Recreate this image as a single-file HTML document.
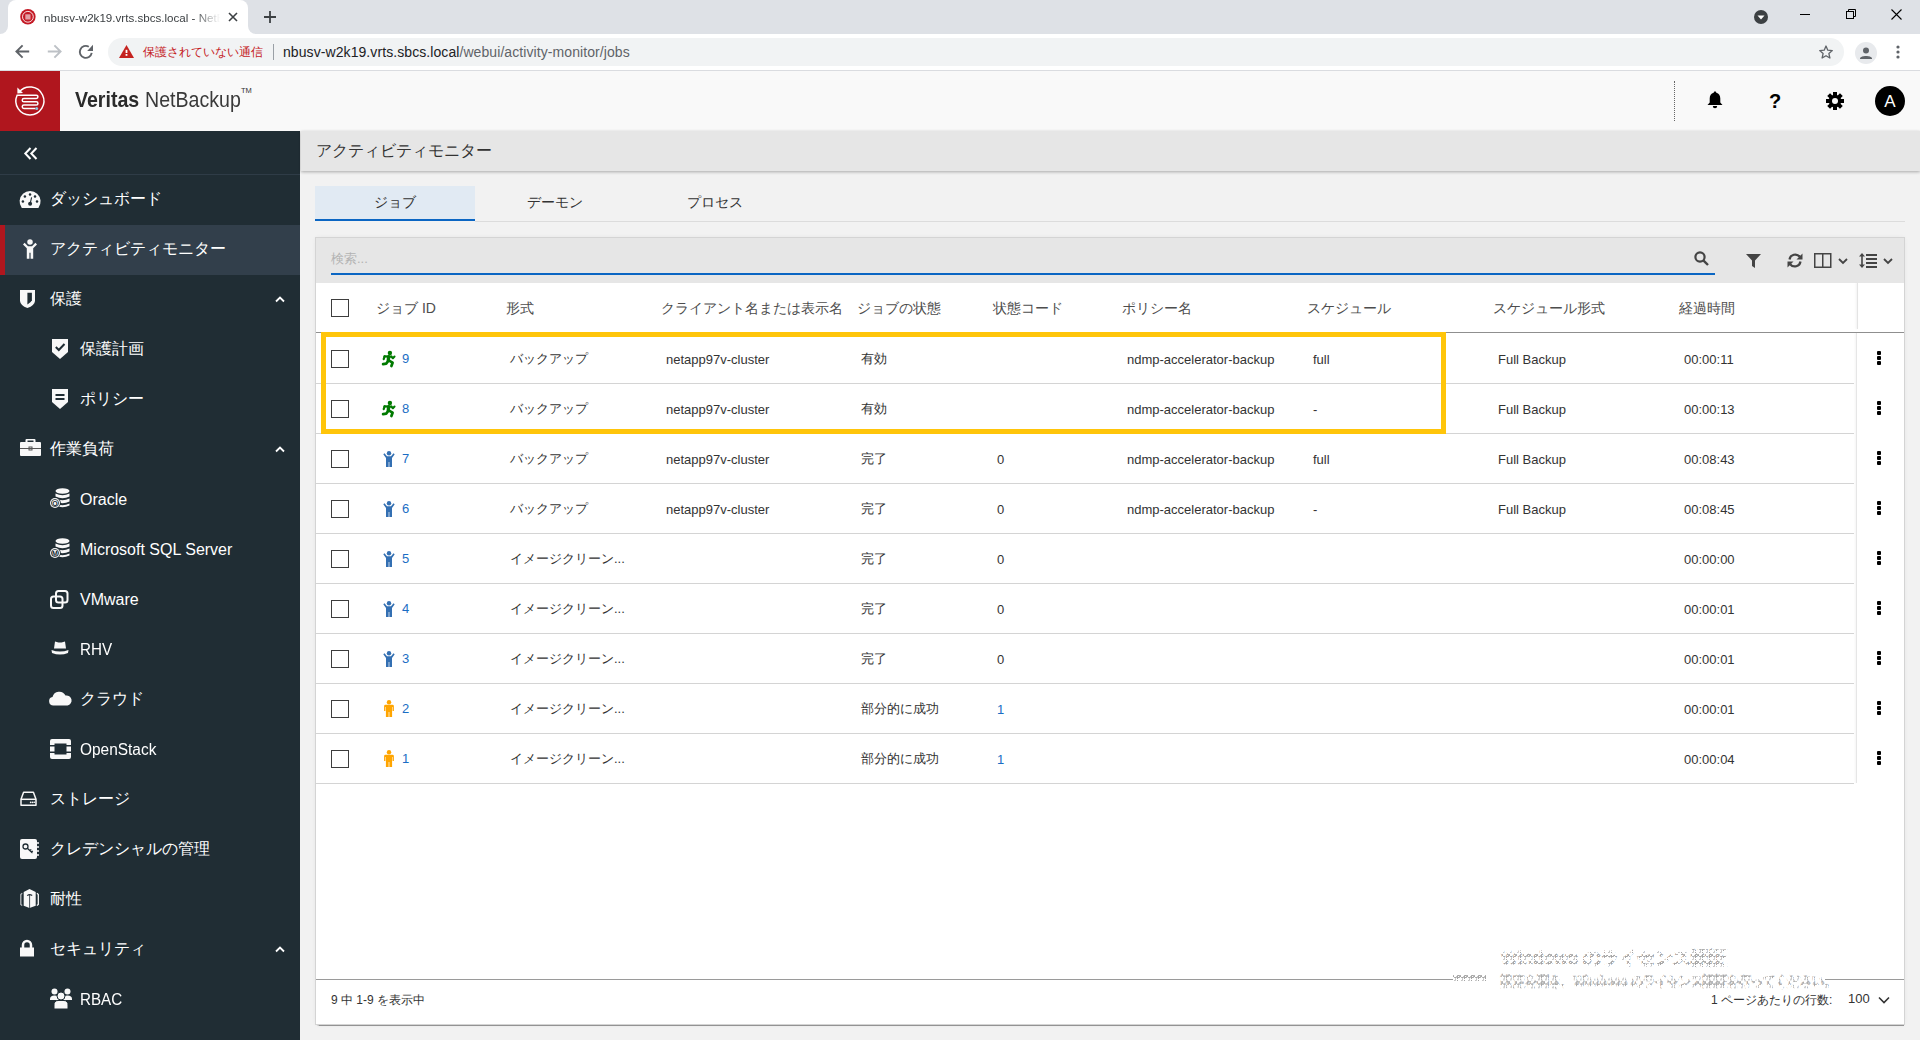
<!DOCTYPE html>
<html><head><meta charset="utf-8"><style>
*{box-sizing:border-box;margin:0;padding:0}
html,body{width:1920px;height:1040px;overflow:hidden;font-family:"Liberation Sans",sans-serif;background:#f2f2f2;color:#333}
.a{position:absolute}
svg{display:block;overflow:visible}
.nw{white-space:nowrap}
.si{position:absolute;left:0;width:300px;height:50px;color:#fff;font-size:16px}
.si .t{position:absolute;left:50px;top:15px;white-space:nowrap;line-height:18px}
.si.sub .t{left:80px}
.hd{position:absolute;top:299px;font-size:14px;color:#4d4d4d;line-height:18px;white-space:nowrap}
.c{position:absolute;font-size:13px;color:#333;line-height:16px;white-space:nowrap}
.cb{position:absolute;left:331px;width:18px;height:18px;border:1.4px solid #3d3d3d;background:#fff}
.sep{position:absolute;left:316px;width:1538px;height:1px;background:#d4d4d4}
.num{position:absolute;left:402px;font-size:13px;color:#1a6dc4;line-height:16px}
.kb{position:absolute;left:1877px;width:4px}
.kb i{display:block;width:4px;height:4px;background:#000;border-radius:1px;margin-bottom:1px}
</style></head><body>
<div class="a" style="left:0;top:0;width:1920px;height:34px;background:#dee1e6"></div>
<div class="a" style="left:8px;top:0;width:240px;height:34px;background:#fff;border-radius:8px 8px 0 0"></div>
<div class="a" style="left:0;top:26px;width:8px;height:8px;background:#fff"></div><div class="a" style="left:0;top:26px;width:8px;height:8px;background:#dee1e6;border-radius:0 0 8px 0"></div>
<div class="a" style="left:248px;top:26px;width:8px;height:8px;background:#fff"></div><div class="a" style="left:248px;top:26px;width:8px;height:8px;background:#dee1e6;border-radius:0 0 0 8px"></div>
<svg class="a" style="left:20px;top:9px" width="16" height="16" viewBox="0 0 16 16"><circle cx="7.9" cy="7.8" r="7.7" fill="#c41a26"/><circle cx="7.9" cy="7.8" r="5.4" fill="none" stroke="#fff" stroke-width="1" opacity=".85"/><rect x="5.3" y="5.3" width="5.2" height="5.2" fill="#e3a0a6"/></svg>

<div class="a nw" style="left:44px;top:11px;font-size:11.6px;line-height:14px;color:#3c4043;width:176px;overflow:hidden;-webkit-mask-image:linear-gradient(90deg,#000 150px,transparent 176px)">nbusv-w2k19.vrts.sbcs.local - NetBackup</div>
<svg class="a" style="left:228px;top:12px" width="10" height="10" viewBox="0 0 10 10"><path d="M1 1L9 9M9 1L1 9" stroke="#3c4043" stroke-width="1.6"/></svg>

<svg class="a" style="left:263px;top:10px" width="14" height="14" viewBox="0 0 14 14"><path d="M7 1V13M1 7H13" stroke="#3c4043" stroke-width="1.8"/></svg>

<svg class="a" style="left:1754px;top:10px" width="14" height="14" viewBox="0 0 14 14"><circle cx="7" cy="7" r="7" fill="#3c4043"/><path d="M3.5 5.5H10.5L7 9.5Z" fill="#fff"/></svg>

<svg class="a" style="left:1800px;top:14px" width="10" height="1" viewBox="0 0 10 1"><rect width="10" height="1" fill="#000"/></svg>

<svg class="a" style="left:1846px;top:9px" width="10" height="10" viewBox="0 0 10 10"><rect x="0.5" y="2.5" width="7" height="7" fill="none" stroke="#000"/><path d="M2.5 2.5V0.5H9.5V7.5H7.5" fill="none" stroke="#000"/></svg>

<svg class="a" style="left:1891px;top:9px" width="11" height="11" viewBox="0 0 11 11"><path d="M0.5 0.5L10.5 10.5M10.5 0.5L0.5 10.5" stroke="#000" stroke-width="1.1"/></svg>

<div class="a" style="left:0;top:34px;width:1920px;height:37px;background:#fff;border-bottom:1px solid #dadce0"></div>
<svg class="a" style="left:15px;top:44px" width="15" height="16" viewBox="0 0 15 16"><path d="M7.6 1.3L1.4 7.5L7.6 13.7M1.4 7.5H14.2" fill="none" stroke="#5f6368" stroke-width="1.9"/></svg>

<svg class="a" style="left:47px;top:44px" width="15" height="16" viewBox="0 0 15 16"><path d="M7.4 1.3L13.6 7.5L7.4 13.7M13.6 7.5H0.8" fill="none" stroke="#bdc1c6" stroke-width="1.9"/></svg>

<svg class="a" style="left:78px;top:44px" width="16" height="16" viewBox="0 0 16 16"><path d="M13.71 8.94A6 6 0 1 1 10.8 2.7" fill="none" stroke="#5f6368" stroke-width="1.9"/><path d="M15 0.8V6.9H9.2Z" fill="#5f6368"/></svg>

<div class="a" style="left:108px;top:38px;width:1736px;height:28px;background:#f1f3f4;border-radius:14px"></div>
<svg class="a" style="left:119px;top:45px" width="15" height="13" viewBox="0 0 15 13"><path d="M7.5 0L15 13H0Z" fill="#c5221f"/><rect x="6.6" y="4.8" width="1.8" height="3.2" fill="#fff"/><rect x="6.6" y="9" width="1.8" height="1.8" fill="#fff"/></svg>

<div class="a nw" style="left:143px;top:44px;font-size:12.4px;line-height:16px;color:#c5221f">保護されていない通信</div>
<div class="a" style="left:273px;top:44px;width:1px;height:16px;background:#9aa0a6"></div>
<div class="a nw" style="left:283px;top:44px;font-size:14px;line-height:16px;color:#202124;letter-spacing:0.08px">nbusv-w2k19.vrts.sbcs.local<span style="color:#5f6368">/webui/activity-monitor/jobs</span></div>
<svg class="a" style="left:1819px;top:45px" width="14" height="14" viewBox="0 0 14 14"><path d="M7 1L8.8 5.2L13.3 5.6L9.9 8.6L10.9 13L7 10.7L3.1 13L4.1 8.6L0.7 5.6L5.2 5.2Z" fill="none" stroke="#5f6368" stroke-width="1.3" stroke-linejoin="round"/></svg>

<svg class="a" style="left:1855px;top:42px" width="22" height="22" viewBox="0 0 22 22"><circle cx="11" cy="11" r="11" fill="#e8eaed"/><circle cx="11" cy="8.5" r="3" fill="#5f6368"/><path d="M5 16.5C5 13 17 13 17 16.5V17H5Z" fill="#5f6368"/></svg>

<svg class="a" style="left:1896px;top:45px" width="4" height="14" viewBox="0 0 4 14"><circle cx="2" cy="2" r="1.6" fill="#5f6368"/><circle cx="2" cy="7" r="1.6" fill="#5f6368"/><circle cx="2" cy="12" r="1.6" fill="#5f6368"/></svg>

<div class="a" style="left:0;top:71px;width:1920px;height:60px;background:#f9f9f9"></div>
<div class="a" style="left:0;top:71px;width:60px;height:60px;background:#b0161e"></div>
<svg class="a" style="left:10px;top:82px" width="40" height="38" viewBox="0 0 40 38"><path d="M9.18 9.9A14 14 0 1 1 7.11 13.2L26.3 13.2A1.65 1.65 0 0 1 26.3 16.5L13.9 16.5A1.65 1.65 0 0 0 13.9 19.8L26.3 19.8A1.65 1.65 0 0 1 26.3 23.1L13.9 23.1A1.65 1.65 0 0 0 13.9 26.4L25.4 26.4" fill="none" stroke="#fff" stroke-width="1.5"/><path d="M7.4 5.6L7.4 11.4L13 10.9Z" fill="#fff"/><circle cx="26.7" cy="26.4" r="1.5" fill="#8ec3dd"/></svg>

<div class="a nw" style="left:75px;top:87px;font-size:22px;line-height:26px;color:#2b2b2b;font-weight:bold;transform:scaleX(0.89);transform-origin:0 0">Veritas</div>
<div class="a nw" style="left:145px;top:87px;font-size:22px;line-height:26px;color:#3a3a3a;transform:scaleX(0.89);transform-origin:0 0">NetBackup</div>
<div class="a nw" style="left:241px;top:86px;font-size:7.5px;line-height:9px;color:#333">TM</div>
<div class="a" style="left:1674px;top:81px;width:1px;height:40px;border-left:1px dotted #666"></div>
<svg class="a" style="left:1707px;top:91px" width="16" height="18" viewBox="0 0 16 18"><path d="M8 0.5C8.8 0.5 9.3 1 9.3 1.8C12 2.5 13.3 4.8 13.3 7.5V11.5L15.5 14H0.5L2.7 11.5V7.5C2.7 4.8 4 2.5 6.7 1.8C6.7 1 7.2 0.5 8 0.5Z" fill="#000"/><path d="M5.8 15H10.2A2.2 2.2 0 0 1 5.8 15Z" fill="#000"/></svg>

<div class="a nw" style="left:1769px;top:90px;font-size:20px;line-height:22px;font-weight:bold;color:#000">?</div>
<svg class="a" style="left:1826px;top:92px" width="18" height="18" viewBox="0 0 18 18"><g transform="translate(9 9)"><g fill="#000"><rect x="-2" y="-9" width="4" height="5" transform="rotate(0)"/><rect x="-2" y="-9" width="4" height="5" transform="rotate(45)"/><rect x="-2" y="-9" width="4" height="5" transform="rotate(90)"/><rect x="-2" y="-9" width="4" height="5" transform="rotate(135)"/><rect x="-2" y="-9" width="4" height="5" transform="rotate(180)"/><rect x="-2" y="-9" width="4" height="5" transform="rotate(225)"/><rect x="-2" y="-9" width="4" height="5" transform="rotate(270)"/><rect x="-2" y="-9" width="4" height="5" transform="rotate(315)"/></g><circle r="6.3" fill="#000"/><circle r="3" fill="#f9f9f9"/></g></svg>

<div class="a" style="left:1875px;top:86px;width:30px;height:30px;border-radius:50%;background:#000"></div>
<div class="a nw" style="left:1875px;top:92px;width:30px;text-align:center;font-size:17px;line-height:20px;color:#fff">A</div>
<div class="a" style="left:0;top:131px;width:300px;height:909px;background:#202d34"></div>
<div class="a" style="left:300px;top:131px;width:1px;height:909px;background:#f2f2f2"></div>
<svg class="a" style="left:24px;top:147px" width="14" height="13" viewBox="0 0 14 13"><path d="M6.5 1L1.3 6.5L6.5 12M12.5 1L7.3 6.5L12.5 12" fill="none" stroke="#fff" stroke-width="2"/></svg>

<div class="a" style="left:0;top:174px;width:300px;height:1px;background:#2f3c47"></div>
<div class="si" style="top:175px;"><span class="t">ダッシュボード</span></div>
<div class="si" style="top:225px;background:#323f4b;"><span class="t">アクティビティモニター</span></div>
<div class="si" style="top:275px;"><span class="t">保護</span></div>
<svg class="a" style="left:275px;top:296px" width="10" height="6" viewBox="0 0 10 6"><path d="M1 5.5L5 1.5L9 5.5" fill="none" stroke="#fff" stroke-width="1.8"/></svg>

<div class="si sub" style="top:325px;"><span class="t">保護計画</span></div>
<div class="si sub" style="top:375px;"><span class="t">ポリシー</span></div>
<div class="si" style="top:425px;"><span class="t">作業負荷</span></div>
<svg class="a" style="left:275px;top:446px" width="10" height="6" viewBox="0 0 10 6"><path d="M1 5.5L5 1.5L9 5.5" fill="none" stroke="#fff" stroke-width="1.8"/></svg>

<div class="si sub" style="top:475px;"><span class="t" style="top:16px">Oracle</span></div>
<div class="si sub" style="top:525px;"><span class="t" style="top:16px">Microsoft SQL Server</span></div>
<div class="si sub" style="top:575px;"><span class="t" style="top:16px">VMware</span></div>
<div class="si sub" style="top:625px;"><span class="t" style="top:16px;transform:scaleX(0.95);transform-origin:0 0">RHV</span></div>
<div class="si sub" style="top:675px;"><span class="t">クラウド</span></div>
<div class="si sub" style="top:725px;"><span class="t" style="top:16px;transform:scaleX(0.965);transform-origin:0 0">OpenStack</span></div>
<div class="si" style="top:775px;"><span class="t">ストレージ</span></div>
<div class="si" style="top:825px;"><span class="t">クレデンシャルの管理</span></div>
<div class="si" style="top:875px;"><span class="t">耐性</span></div>
<div class="si" style="top:925px;"><span class="t">セキュリティ</span></div>
<svg class="a" style="left:275px;top:946px" width="10" height="6" viewBox="0 0 10 6"><path d="M1 5.5L5 1.5L9 5.5" fill="none" stroke="#fff" stroke-width="1.8"/></svg>

<div class="si sub" style="top:975px;"><span class="t" style="top:16px;transform:scaleX(0.95);transform-origin:0 0">RBAC</span></div>
<div class="a" style="left:0;top:225px;width:5px;height:50px;background:#b0161e"></div>
<svg class="a" style="left:14px;top:185px" width="32" height="28" viewBox="0 0 32 28"><path d="M7.8 22.9A10.5 10.5 0 1 1 24.4 22.9Z" fill="#f8f8f8"/><circle cx="16" cy="9.4" r="1.25" fill="#202d34"/><circle cx="10.9" cy="11.6" r="1.25" fill="#202d34"/><circle cx="21" cy="11.6" r="1.25" fill="#202d34"/><circle cx="8.9" cy="16.5" r="1.25" fill="#202d34"/><circle cx="23" cy="16.5" r="1.25" fill="#202d34"/><path d="M16.1 18.8L17.6 12.4" stroke="#202d34" stroke-width="1.1"/><circle cx="16.1" cy="18.8" r="2" fill="#202d34"/></svg>

<svg class="a" style="left:23px;top:239px" width="14" height="20" viewBox="0 0 14 20"><circle cx="7" cy="3" r="2.75" fill="#f8f8f8"/><path d="M0 5.4L1.6 3.8L5 7.2H9L12.4 3.8L14 5.4L10.2 9.2V19.8H7.6V13.8H6.4V19.8H3.8V9.2Z" fill="#f8f8f8"/></svg>

<svg class="a" style="left:20px;top:290px" width="15" height="18" viewBox="0 0 15 18"><path d="M0 0H15V10.9Q14.6 15.4 7.4 17.9Q0.4 15.4 0 10.9Z" fill="#f8f8f8"/><path d="M7.4 2.8H11.9V10.3Q11.2 12.6 7.4 14.4Z" fill="#202d34"/></svg>

<svg class="a" style="left:52px;top:339px" width="16" height="20" viewBox="0 0 16 20"><path d="M0 0H16V13L8 20L0 13Z" fill="#f8f8f8"/><path d="M3.8 8L6.8 11L12.5 5" fill="none" stroke="#202d34" stroke-width="2"/></svg>

<svg class="a" style="left:52px;top:389px" width="16" height="20" viewBox="0 0 16 20"><path d="M0 0H16V13L8 20L0 13Z" fill="#f8f8f8"/><rect x="3.5" y="5" width="9" height="2" fill="#202d34"/><rect x="3.5" y="9" width="9" height="2" fill="#202d34"/></svg>

<svg class="a" style="left:20px;top:439px" width="21" height="17" viewBox="0 0 21 17"><rect x="5.5" y="0" width="10" height="4" rx="1" fill="#f8f8f8"/><rect x="7.5" y="1.5" width="6" height="2" fill="#202d34"/><rect x="0" y="3" width="21" height="14" rx="1" fill="#f8f8f8"/><rect x="0" y="9" width="21" height="1" fill="#555"/><rect x="9" y="8" width="3" height="3" fill="none" stroke="#555" stroke-width="1"/></svg>

<svg class="a" style="left:49px;top:488px" width="21" height="20" viewBox="0 0 21 20"><ellipse cx="13.5" cy="3" rx="7" ry="2.8" fill="#f8f8f8"/><path d="M6.5 5.5Q13.5 9 20.5 5.5V8.5Q13.5 12 6.5 8.5Z" fill="#f8f8f8"/><path d="M6.5 10.5Q13.5 14 20.5 10.5V13.5Q13.5 17 6.5 13.5Z" fill="#f8f8f8"/><path d="M6.5 15.5Q13.5 19 20.5 15.5V17.5Q13.5 21 6.5 17.5Z" fill="#f8f8f8"/><circle cx="6" cy="15" r="5.8" fill="#202d34"/><circle cx="6" cy="15" r="5" fill="#f8f8f8"/><circle cx="6" cy="15" r="3.6" fill="none" stroke="#202d34" stroke-width="0.8"/><text x="6" y="17.5" font-size="7" text-anchor="middle" fill="#202d34" font-family="Liberation Sans" font-weight="bold">O</text></svg>

<svg class="a" style="left:49px;top:538px" width="21" height="20" viewBox="0 0 21 20"><ellipse cx="13.5" cy="3" rx="7" ry="2.8" fill="#f8f8f8"/><path d="M6.5 5.5Q13.5 9 20.5 5.5V8.5Q13.5 12 6.5 8.5Z" fill="#f8f8f8"/><path d="M6.5 10.5Q13.5 14 20.5 10.5V13.5Q13.5 17 6.5 13.5Z" fill="#f8f8f8"/><path d="M6.5 15.5Q13.5 19 20.5 15.5V17.5Q13.5 21 6.5 17.5Z" fill="#f8f8f8"/><circle cx="6" cy="15" r="5.8" fill="#202d34"/><circle cx="6" cy="15" r="5" fill="#f8f8f8"/><circle cx="6" cy="15" r="3.6" fill="none" stroke="#202d34" stroke-width="0.8"/><text x="6" y="17.5" font-size="7" text-anchor="middle" fill="#202d34" font-family="Liberation Sans" font-weight="bold">M</text></svg>

<svg class="a" style="left:50px;top:590px" width="19" height="19" viewBox="0 0 19 19"><rect x="6" y="1" width="11.5" height="11.5" rx="2.5" fill="none" stroke="#f8f8f8" stroke-width="2"/><rect x="1" y="6.5" width="11.5" height="11.5" rx="2.5" fill="none" stroke="#f8f8f8" stroke-width="2"/></svg>

<svg class="a" style="left:51px;top:641px" width="18" height="15" viewBox="0 0 18 15"><path d="M4 0.5L7.5 1.5L10.5 1.5L14 0.5L15 7.5H3Z" fill="#f8f8f8"/><path d="M0.5 9Q9 12 17.5 9L17 12Q9 15 1 12Z" fill="#f8f8f8"/></svg>

<svg class="a" style="left:49px;top:689px" width="23" height="17" viewBox="0 0 23 17"><path d="M4.5 16.5A4.3 4.3 0 0 1 3.5 8A7 7 0 0 1 16.5 6.5A5 5 0 0 1 18.5 16.5Z" fill="#f8f8f8"/></svg>

<svg class="a" style="left:50px;top:739px" width="21" height="20" viewBox="0 0 21 20"><path d="M0 2A2 2 0 0 1 2 0H19A2 2 0 0 1 21 2V6H16.5V4.5H4.5V6H0Z" fill="#f8f8f8"/><path d="M0 14H4.5V15.5H16.5V14H21V18A2 2 0 0 1 19 20H2A2 2 0 0 1 0 18Z" fill="#f8f8f8"/><rect x="0" y="7.5" width="4.5" height="5" fill="#f8f8f8"/><rect x="16.5" y="7.5" width="4.5" height="5" fill="#f8f8f8"/></svg>

<svg class="a" style="left:16px;top:786px" width="26" height="26" viewBox="0 0 26 26"><path d="M7.6 6.3H17.4L20 13.3V19.3H5V13.3Z" fill="none" stroke="#f8f8f8" stroke-width="1.5" stroke-linejoin="round"/><path d="M5 13.3H20" stroke="#f8f8f8" stroke-width="1.5"/><circle cx="14.7" cy="16.3" r="0.9" fill="#f8f8f8"/><circle cx="16.7" cy="16.3" r="0.9" fill="#f8f8f8"/><circle cx="18.4" cy="16.3" r="0.8" fill="#f8f8f8"/></svg>

<svg class="a" style="left:20px;top:839px" width="19" height="20" viewBox="0 0 19 20"><rect x="0" y="0" width="17" height="20" rx="2" fill="#f8f8f8"/><circle cx="18" cy="4" r="1" fill="#f8f8f8"/><circle cx="18" cy="8" r="1" fill="#f8f8f8"/><circle cx="18" cy="12" r="1" fill="#f8f8f8"/><circle cx="18" cy="16" r="1" fill="#f8f8f8"/><circle cx="5.5" cy="7.5" r="2.5" fill="none" stroke="#202d34" stroke-width="1.3"/><path d="M7.3 9.3L12.5 14M10 11.6L11.3 10.5M11.5 13L12.8 11.9" stroke="#202d34" stroke-width="1.3"/></svg>

<svg class="a" style="left:16px;top:885px" width="26" height="26" viewBox="0 0 26 26"><path d="M13.5 4L19.7 7V20.8L13.5 23L7.7 20.8V7Z" fill="#f8f8f8"/><path d="M6.2 8.3L4.8 9.5V19.5L6.2 20.6" fill="none" stroke="#b9bcbf" stroke-width="1.3"/><path d="M20.9 8.3L22.3 9.5V19.5L20.9 20.6" fill="none" stroke="#f8f8f8" stroke-width="1.3"/><path d="M13.6 9.5V23" stroke="#4a525a" stroke-width="1"/><path d="M11.2 10.6Q13.6 8.6 16.2 10.6" fill="none" stroke="#2a333b" stroke-width="1.2"/></svg>

<svg class="a" style="left:20px;top:940px" width="14" height="17" viewBox="0 0 14 17"><path d="M3 8V5A4 4 0 0 1 11 5V8" fill="none" stroke="#f8f8f8" stroke-width="2.5"/><rect x="0" y="7.5" width="14" height="9" fill="#f8f8f8"/></svg>

<svg class="a" style="left:50px;top:988px" width="22" height="21" viewBox="0 0 22 21"><circle cx="4.5" cy="3.5" r="3" fill="#f8f8f8"/><circle cx="17.5" cy="3.5" r="3" fill="#f8f8f8"/><path d="M0 11A4.5 3.5 0 0 1 9 11V12H0Z" fill="#f8f8f8"/><path d="M13 11A4.5 3.5 0 0 1 22 11V12H13Z" fill="#f8f8f8"/><circle cx="11" cy="8" r="4" stroke="#202d34" stroke-width="1" fill="#f8f8f8"/><path d="M4 21V17A4 4 0 0 1 8 12.5H14A4 4 0 0 1 18 17V21Z" stroke="#202d34" stroke-width="1" fill="#f8f8f8"/></svg>

<div class="a" style="left:301px;top:131px;width:1619px;height:40px;background:#e6e6e6;box-shadow:0 1px 3px rgba(0,0,0,.3)"></div>
<div class="a nw" style="left:316px;top:142px;font-size:16px;line-height:18px;color:#333">アクティビティモニター</div>
<div class="a" style="left:315px;top:186px;width:160px;height:35px;background:#e1eaf3;border-bottom:2px solid #0b66c3"></div>
<div class="a" style="left:475px;top:221px;width:1430px;height:1px;background:#dcdcdc"></div>
<div class="a nw" style="left:315px;top:195px;width:160px;text-align:center;font-size:13.5px;line-height:16px;color:#333">ジョブ</div>
<div class="a nw" style="left:475px;top:195px;width:160px;text-align:center;font-size:13.5px;line-height:16px;color:#333">デーモン</div>
<div class="a nw" style="left:635px;top:195px;width:160px;text-align:center;font-size:13.5px;line-height:16px;color:#333">プロセス</div>
<div class="a" style="left:316px;top:238px;width:1588px;height:786px;background:#fff;box-shadow:0 0 0 1px #d4d4d4,0 2px 1px -0.5px rgba(0,0,0,.38),0 0 5px rgba(0,0,0,.07)"></div>
<div class="a" style="left:316px;top:238px;width:1588px;height:45px;background:#e6e6e6"></div>
<div class="a nw" style="left:331px;top:251px;font-size:13px;line-height:16px;color:#b3b3b3">検索...</div>
<div class="a" style="left:331px;top:273px;width:1384px;height:2px;background:#0b66c3"></div>
<svg class="a" style="left:1694px;top:251px" width="15" height="15" viewBox="0 0 15 15"><circle cx="6" cy="6" r="4.6" fill="none" stroke="#444" stroke-width="2.2"/><path d="M9.3 9.3L14 14" stroke="#444" stroke-width="2.4"/></svg>

<svg class="a" style="left:1746px;top:254px" width="15" height="14" viewBox="0 0 15 14"><path d="M0 0H15L9 6.5V14L6 12V6.5Z" fill="#444"/></svg>

<svg class="a" style="left:1787px;top:253px" width="16" height="15" viewBox="0 0 16 15"><path d="M2.5 6.5A5.8 5.8 0 0 1 12.8 3.8" fill="none" stroke="#444" stroke-width="2.2"/><path d="M15.5 0.5V6.5H9.5Z" fill="#444"/><path d="M13.5 8.5A5.8 5.8 0 0 1 3.2 11.2" fill="none" stroke="#444" stroke-width="2.2"/><path d="M0.5 14.5V8.5H6.5Z" fill="#444"/></svg>

<svg class="a" style="left:1814px;top:253px" width="18" height="15" viewBox="0 0 18 15"><rect x="0.75" y="0.75" width="16" height="13.5" fill="none" stroke="#444" stroke-width="1.5"/><path d="M8.75 1V14" stroke="#444" stroke-width="1.5"/></svg>

<svg class="a" style="left:1838px;top:258px" width="10" height="7" viewBox="0 0 10 7"><path d="M1 1L5 5L9 1" fill="none" stroke="#444" stroke-width="1.8"/></svg>

<svg class="a" style="left:1859px;top:253px" width="18" height="15" viewBox="0 0 18 15"><path d="M3 2V13" stroke="#444" stroke-width="1.6"/><path d="M0 3.5L3 0L6 3.5ZM0 11.5L3 15L6 11.5Z" fill="#444"/><rect x="7" y="1" width="11" height="2" fill="#444"/><rect x="7" y="5" width="11" height="2" fill="#444"/><rect x="7" y="9" width="11" height="2" fill="#444"/><rect x="7" y="13" width="11" height="2" fill="#444"/></svg>

<svg class="a" style="left:1883px;top:258px" width="10" height="7" viewBox="0 0 10 7"><path d="M1 1L5 5L9 1" fill="none" stroke="#444" stroke-width="1.8"/></svg>

<div class="cb" style="top:299px"></div>
<div class="hd" style="left:376px">ジョブ ID</div>
<div class="hd" style="left:506px">形式</div>
<div class="hd" style="left:661px">クライアント名または表示名</div>
<div class="hd" style="left:857px">ジョブの状態</div>
<div class="hd" style="left:993px">状態コード</div>
<div class="hd" style="left:1122px">ポリシー名</div>
<div class="hd" style="left:1307px">スケジュール</div>
<div class="hd" style="left:1493px">スケジュール形式</div>
<div class="hd" style="left:1679px">経過時間</div>
<div class="a" style="left:1857px;top:283px;width:1px;height:46px;background:#e4e4e4;box-shadow:-1px 0 2px rgba(0,0,0,.08)"></div>
<div class="a" style="left:316px;top:332px;width:1588px;height:1px;background:#8f8f8f"></div>
<div class="cb" style="top:350px"></div>
<svg class="a" style="left:378px;top:347px" width="20" height="22" viewBox="0 0 20 22"><g fill="none" stroke="#007a00" stroke-linecap="round" stroke-linejoin="round"><path d="M10.6 9.8L10.3 13.6" stroke-width="3.4"/><path d="M6.6 9.4L13.4 9.6" stroke-width="2.4"/><path d="M6.6 9.4L5.7 12.2" stroke-width="2.2"/><path d="M13.4 9.7L14.9 11.2L16.5 9.6" stroke-width="2.1"/><path d="M10 14.2L8.2 16.6L5.1 17.2" stroke-width="2.7"/><path d="M11 13.6L14.6 15.7L13.4 19" stroke-width="2.7"/></g><circle cx="11.9" cy="6" r="2.2" fill="#007a00"/></svg>

<div class="num" style="top:351px">9</div>
<div class="c" style="left:510px;top:350.5px">バックアップ</div>
<div class="c" style="left:666px;top:351.5px">netapp97v-cluster</div>
<div class="c" style="left:861px;top:350.5px">有効</div>
<div class="c" style="left:1127px;top:351.5px">ndmp-accelerator-backup</div>
<div class="c" style="left:1313px;top:351.5px">full</div>
<div class="c" style="left:1498px;top:351.5px">Full Backup</div>
<div class="c" style="left:1684px;top:351.5px">00:00:11</div>
<div class="kb" style="top:351px"><i></i><i></i><i></i></div>
<div class="sep" style="top:383px"></div>
<div class="cb" style="top:400px"></div>
<svg class="a" style="left:378px;top:397px" width="20" height="22" viewBox="0 0 20 22"><g fill="none" stroke="#007a00" stroke-linecap="round" stroke-linejoin="round"><path d="M10.6 9.8L10.3 13.6" stroke-width="3.4"/><path d="M6.6 9.4L13.4 9.6" stroke-width="2.4"/><path d="M6.6 9.4L5.7 12.2" stroke-width="2.2"/><path d="M13.4 9.7L14.9 11.2L16.5 9.6" stroke-width="2.1"/><path d="M10 14.2L8.2 16.6L5.1 17.2" stroke-width="2.7"/><path d="M11 13.6L14.6 15.7L13.4 19" stroke-width="2.7"/></g><circle cx="11.9" cy="6" r="2.2" fill="#007a00"/></svg>

<div class="num" style="top:401px">8</div>
<div class="c" style="left:510px;top:400.5px">バックアップ</div>
<div class="c" style="left:666px;top:401.5px">netapp97v-cluster</div>
<div class="c" style="left:861px;top:400.5px">有効</div>
<div class="c" style="left:1127px;top:401.5px">ndmp-accelerator-backup</div>
<div class="c" style="left:1313px;top:401.5px">-</div>
<div class="c" style="left:1498px;top:401.5px">Full Backup</div>
<div class="c" style="left:1684px;top:401.5px">00:00:13</div>
<div class="kb" style="top:401px"><i></i><i></i><i></i></div>
<div class="sep" style="top:433px"></div>
<div class="cb" style="top:450px"></div>
<svg class="a" style="left:383px;top:451px" width="12" height="16" viewBox="0 0 12 16"><circle cx="6" cy="2.3" r="2.2" fill="#336fb2"/><path d="M0.3 3.2L1.5 2.2L4 5.2H8L10.5 2.2L11.7 3.2L9 7V16H6.35V11H5.65V16H3V7Z" fill="#336fb2"/></svg>

<div class="num" style="top:451px">7</div>
<div class="c" style="left:510px;top:450.5px">バックアップ</div>
<div class="c" style="left:666px;top:451.5px">netapp97v-cluster</div>
<div class="c" style="left:861px;top:450.5px">完了</div>
<div class="c" style="left:1127px;top:451.5px">ndmp-accelerator-backup</div>
<div class="c" style="left:1313px;top:451.5px">full</div>
<div class="c" style="left:1498px;top:451.5px">Full Backup</div>
<div class="c" style="left:1684px;top:451.5px">00:08:43</div>
<div class="c" style="left:997px;top:451.5px;color:#333">0</div>
<div class="kb" style="top:451px"><i></i><i></i><i></i></div>
<div class="sep" style="top:483px"></div>
<div class="cb" style="top:500px"></div>
<svg class="a" style="left:383px;top:501px" width="12" height="16" viewBox="0 0 12 16"><circle cx="6" cy="2.3" r="2.2" fill="#336fb2"/><path d="M0.3 3.2L1.5 2.2L4 5.2H8L10.5 2.2L11.7 3.2L9 7V16H6.35V11H5.65V16H3V7Z" fill="#336fb2"/></svg>

<div class="num" style="top:501px">6</div>
<div class="c" style="left:510px;top:500.5px">バックアップ</div>
<div class="c" style="left:666px;top:501.5px">netapp97v-cluster</div>
<div class="c" style="left:861px;top:500.5px">完了</div>
<div class="c" style="left:1127px;top:501.5px">ndmp-accelerator-backup</div>
<div class="c" style="left:1313px;top:501.5px">-</div>
<div class="c" style="left:1498px;top:501.5px">Full Backup</div>
<div class="c" style="left:1684px;top:501.5px">00:08:45</div>
<div class="c" style="left:997px;top:501.5px;color:#333">0</div>
<div class="kb" style="top:501px"><i></i><i></i><i></i></div>
<div class="sep" style="top:533px"></div>
<div class="cb" style="top:550px"></div>
<svg class="a" style="left:383px;top:551px" width="12" height="16" viewBox="0 0 12 16"><circle cx="6" cy="2.3" r="2.2" fill="#336fb2"/><path d="M0.3 3.2L1.5 2.2L4 5.2H8L10.5 2.2L11.7 3.2L9 7V16H6.35V11H5.65V16H3V7Z" fill="#336fb2"/></svg>

<div class="num" style="top:551px">5</div>
<div class="c" style="left:510px;top:550.5px">イメージクリーン...</div>
<div class="c" style="left:861px;top:550.5px">完了</div>
<div class="c" style="left:1684px;top:551.5px">00:00:00</div>
<div class="c" style="left:997px;top:551.5px;color:#333">0</div>
<div class="kb" style="top:551px"><i></i><i></i><i></i></div>
<div class="sep" style="top:583px"></div>
<div class="cb" style="top:600px"></div>
<svg class="a" style="left:383px;top:601px" width="12" height="16" viewBox="0 0 12 16"><circle cx="6" cy="2.3" r="2.2" fill="#336fb2"/><path d="M0.3 3.2L1.5 2.2L4 5.2H8L10.5 2.2L11.7 3.2L9 7V16H6.35V11H5.65V16H3V7Z" fill="#336fb2"/></svg>

<div class="num" style="top:601px">4</div>
<div class="c" style="left:510px;top:600.5px">イメージクリーン...</div>
<div class="c" style="left:861px;top:600.5px">完了</div>
<div class="c" style="left:1684px;top:601.5px">00:00:01</div>
<div class="c" style="left:997px;top:601.5px;color:#333">0</div>
<div class="kb" style="top:601px"><i></i><i></i><i></i></div>
<div class="sep" style="top:633px"></div>
<div class="cb" style="top:650px"></div>
<svg class="a" style="left:383px;top:651px" width="12" height="16" viewBox="0 0 12 16"><circle cx="6" cy="2.3" r="2.2" fill="#336fb2"/><path d="M0.3 3.2L1.5 2.2L4 5.2H8L10.5 2.2L11.7 3.2L9 7V16H6.35V11H5.65V16H3V7Z" fill="#336fb2"/></svg>

<div class="num" style="top:651px">3</div>
<div class="c" style="left:510px;top:650.5px">イメージクリーン...</div>
<div class="c" style="left:861px;top:650.5px">完了</div>
<div class="c" style="left:1684px;top:651.5px">00:00:01</div>
<div class="c" style="left:997px;top:651.5px;color:#333">0</div>
<div class="kb" style="top:651px"><i></i><i></i><i></i></div>
<div class="sep" style="top:683px"></div>
<div class="cb" style="top:700px"></div>
<svg class="a" style="left:384px;top:700px" width="10" height="17" viewBox="0 0 10 17"><circle cx="5" cy="2.2" r="2.2" fill="#ffa500"/><path d="M1.5 4.8H8.5A1.4 1.4 0 0 1 9.9 6.2V11H8.6V7H8.1V17H5.35V12H4.65V17H1.9V7H1.4V11H0.1V6.2A1.4 1.4 0 0 1 1.5 4.8Z" fill="#ffa500"/></svg>

<div class="num" style="top:701px">2</div>
<div class="c" style="left:510px;top:700.5px">イメージクリーン...</div>
<div class="c" style="left:861px;top:700.5px">部分的に成功</div>
<div class="c" style="left:1684px;top:701.5px">00:00:01</div>
<div class="c" style="left:997px;top:701.5px;color:#1a6dc4">1</div>
<div class="kb" style="top:701px"><i></i><i></i><i></i></div>
<div class="sep" style="top:733px"></div>
<div class="cb" style="top:750px"></div>
<svg class="a" style="left:384px;top:750px" width="10" height="17" viewBox="0 0 10 17"><circle cx="5" cy="2.2" r="2.2" fill="#ffa500"/><path d="M1.5 4.8H8.5A1.4 1.4 0 0 1 9.9 6.2V11H8.6V7H8.1V17H5.35V12H4.65V17H1.9V7H1.4V11H0.1V6.2A1.4 1.4 0 0 1 1.5 4.8Z" fill="#ffa500"/></svg>

<div class="num" style="top:751px">1</div>
<div class="c" style="left:510px;top:750.5px">イメージクリーン...</div>
<div class="c" style="left:861px;top:750.5px">部分的に成功</div>
<div class="c" style="left:1684px;top:751.5px">00:00:04</div>
<div class="c" style="left:997px;top:751.5px;color:#1a6dc4">1</div>
<div class="kb" style="top:751px"><i></i><i></i><i></i></div>
<div class="sep" style="top:783px"></div>
<div class="a" style="left:1856px;top:333px;width:1px;height:450px;background:#e6e6e6;box-shadow:-1px 0 2px rgba(0,0,0,.06)"></div>
<div class="a" style="left:321px;top:332px;width:1125px;height:102px;border:5px solid #ffc50a"></div>
<div class="a" style="left:316px;top:979px;width:1588px;height:1px;background:#9a9a9a"></div>
<div class="a nw" style="left:331px;top:993px;font-size:12px;line-height:14px;color:#333">9 中 1-9 を表示中</div>
<div class="a nw" style="left:1711px;top:993px;font-size:12px;line-height:14px;color:#333">1 ページあたりの行数:</div>
<div class="a nw" style="left:1848px;top:992px;font-size:13px;line-height:14px;color:#333">100</div>
<div class="a" style="left:1453px;top:976px;width:372px;height:6px;background:#fff"></div>
<svg class="a" style="left:1450px;top:940px" width="400" height="52" viewBox="0 0 400 52"><defs><pattern id="dots" width="7" height="7" patternUnits="userSpaceOnUse"><rect x="0" y="0" width="1" height="1" fill="#b4b4b4"/><rect x="0" y="1" width="1" height="1" fill="#a4a4a4"/><rect x="0" y="2" width="1" height="1" fill="#a4a4a4"/><rect x="0" y="3" width="1" height="1" fill="#a4a4a4"/><rect x="0" y="5" width="1" height="1" fill="#a4a4a4"/><rect x="1" y="0" width="1" height="1" fill="#a4a4a4"/><rect x="1" y="2" width="1" height="1" fill="#a4a4a4"/><rect x="1" y="6" width="1" height="1" fill="#d0d0d0"/><rect x="2" y="0" width="1" height="1" fill="#b4b4b4"/><rect x="2" y="1" width="1" height="1" fill="#b4b4b4"/><rect x="2" y="2" width="1" height="1" fill="#b4b4b4"/><rect x="3" y="0" width="1" height="1" fill="#b4b4b4"/><rect x="3" y="1" width="1" height="1" fill="#a4a4a4"/><rect x="4" y="2" width="1" height="1" fill="#b4b4b4"/><rect x="4" y="5" width="1" height="1" fill="#c4c4c4"/><rect x="5" y="2" width="1" height="1" fill="#a4a4a4"/><rect x="5" y="3" width="1" height="1" fill="#d0d0d0"/><rect x="5" y="4" width="1" height="1" fill="#c4c4c4"/><rect x="5" y="5" width="1" height="1" fill="#d0d0d0"/><rect x="6" y="1" width="1" height="1" fill="#c4c4c4"/><rect x="6" y="2" width="1" height="1" fill="#c4c4c4"/></pattern></defs><text x="51" y="24" font-size="17.6" fill="url(#dots)" font-family="Liberation Sans" font-weight="bold" stroke="url(#dots)" stroke-width="1">Windows のライセンス認証</text><text x="51" y="46" font-size="12.3" fill="url(#dots)" font-family="Liberation Sans" font-weight="bold" stroke="url(#dots)" stroke-width="1" transform="translate(0 -7) scale(1 1.15)">設定を開き、Windows のライセンス認証を行ってください。</text><rect x="3" y="35" width="33" height="6" fill="url(#dots)"/></svg>
<svg class="a" style="left:1878px;top:996px" width="12" height="8" viewBox="0 0 12 8"><path d="M1 1.5L6 6.5L11 1.5" fill="none" stroke="#333" stroke-width="1.6"/></svg>

</body></html>
